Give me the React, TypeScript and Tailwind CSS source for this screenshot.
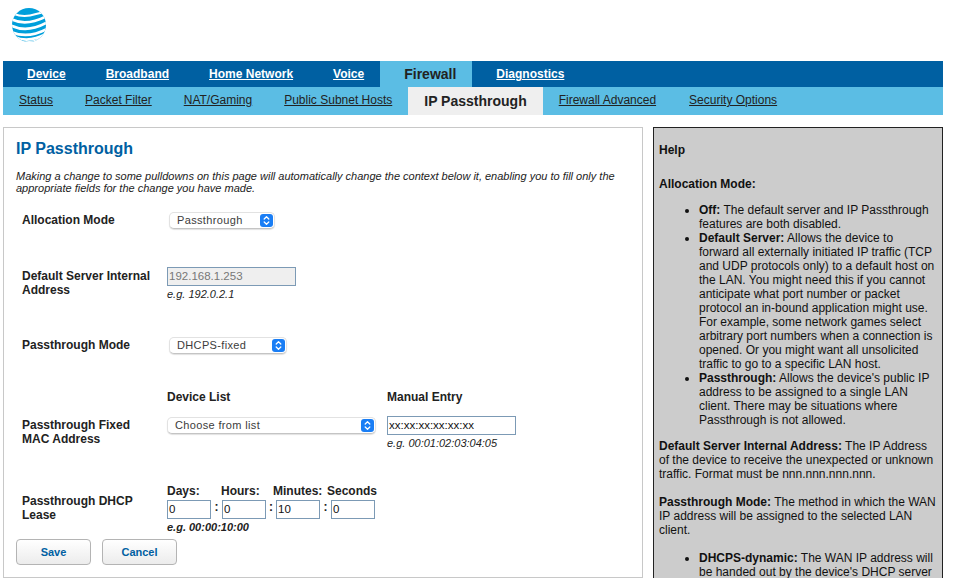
const F = { fontFamily: '"Liberation Sans", Arial, sans-serif' };

function Logo() {
  return (
    <svg width="34" height="34" viewBox="0 0 34 34" className="block">
      <defs>
        <clipPath id="globe">
          <circle cx="17" cy="17" r="17" />
        </clipPath>
      </defs>
      <g clipPath="url(#globe)">
        <rect width="34" height="34" fill="#009fdb" />
        <g fill="none" stroke="#fff">
          <path d="M2 6 Q12 10 24 6 Q28 5 33 4" strokeWidth="2" />
          <path d="M-1 11 Q14 19 35 8" strokeWidth="2.6" />
          <path d="M-1 17.5 Q15 25.5 35 14.5" strokeWidth="2.6" />
          <path d="M-1 24 Q16 31 35 21" strokeWidth="2.8" />
          <path d="M2 29 Q17 35.5 34 26" strokeWidth="2.8" />
        </g>
        <path d="M5 33 Q17 36 30 30" fill="none" stroke="#fff" strokeWidth="1.6" />
      </g>
    </svg>
  );
}

function Chevrons() {
  return (
    <span className="flex h-[13px] w-[13px] shrink-0 items-center justify-center rounded-[3px] bg-[#1a7ef5]">
      <svg width="7" height="11" viewBox="0 0 7 11" fill="none" stroke="#fff" strokeWidth="1.3" strokeLinecap="round" strokeLinejoin="round">
        <path d="M1.2 4 L3.5 1.8 L5.8 4" />
        <path d="M1.2 7 L3.5 9.2 L5.8 7" />
      </svg>
    </span>
  );
}

function MacSelect({ value, className }: { value: string; className: string }) {
  return (
    <div
      className={`flex h-[17px] items-center justify-between rounded-[5px] border border-[#e2e2e2] border-b-[#c4c4c4] bg-white pr-[1px] pl-[7px] text-[11px] tracking-[0.35px] text-[#3c3c3c] shadow-[0_1px_1px_rgba(0,0,0,0.12)] ${className}`}
    >
      <span>{value}</span>
      <Chevrons />
    </div>
  );
}

function TextBox({ value, className }: { value: string; className: string }) {
  return (
    <div className={`flex h-[19px] items-center border border-[#7c9ab5] pl-[1px] text-[11.5px] ${className}`}>
      {value}
    </div>
  );
}

function Hint({ children, bold }: { children: string; bold?: boolean }) {
  return <div className={`text-[11px] leading-[12px] italic text-[#222] ${bold ? 'font-bold' : ''}`}>{children}</div>;
}

function Label({ children }: { children: React.ReactNode }) {
  return <div className="w-[145px] shrink-0 text-[12px] leading-[14px] font-bold text-[#222]">{children}</div>;
}

const top = ['Device', 'Broadband', 'Home Network', 'Voice', 'Firewall', 'Diagnostics'];
const sub = ['Status', 'Packet Filter', 'NAT/Gaming', 'Public Subnet Hosts', 'IP Passthrough', 'Firewall Advanced', 'Security Options'];

export default function App() {
  return (
    <div style={F} className="h-[578px] w-[953px] overflow-hidden bg-white">
      <div className="h-[61px] pt-[8px] pl-[12px]">
        <Logo />
      </div>
      <div className="ml-[3px] flex h-[26px] w-[940px] bg-[#0060a2]">
        {top.map((t) =>
          t === 'Firewall' ? (
            <div key={t} className="flex items-center bg-[#5bbde4] pr-4 pl-6 text-[14px] font-bold text-[#222]">
              {t}
            </div>
          ) : (
            <a key={t} className="flex items-center pr-4 pl-6 text-[12px] font-bold text-white underline">
              {t}
            </a>
          ),
        )}
      </div>
      <div className="ml-[3px] flex h-[28px] w-[940px] bg-[#5bbde4]">
        {sub.map((t) =>
          t === 'IP Passthrough' ? (
            <div key={t} className="flex items-center bg-[#efefef] px-4 text-[14px] font-bold text-[#222]">
              {t}
            </div>
          ) : (
            <a
              key={t}
              className={`flex items-center pb-[2px] pl-4 text-[12px] text-[#222] underline ${t === 'Firewall Advanced' ? 'pr-[17px]' : 'pr-4'}`}
            >
              {t}
            </a>
          ),
        )}
      </div>
      <div className="mt-[12px] ml-[3px] flex h-[460px] w-[940px] items-start gap-[10px]">
        <div className="h-[451px] w-[640px] shrink-0 border border-[#c8c8c8] px-[12px] pt-[11px]">
          <h1 className="text-[16px] leading-[20px] font-bold text-[#0060a2]">IP Passthrough</h1>
          <p className="mt-[11px] w-[610px] text-[11px] leading-[12px] italic text-[#222]">
            Making a change to some pulldowns on this page will automatically change the context below it, enabling you to fill only the appropriate fields for the change you have made.
          </p>
          <div className="mt-[18px] flex h-[54px] items-start pl-[6px]">
            <div className="mt-[1px]">
              <Label>Allocation Mode</Label>
            </div>
            <MacSelect value="Passthrough" className="ml-[2px] w-[106px]" />
          </div>
          <div className="mt-[1px] flex h-[70px] pl-[6px]">
            <div className="mt-[2px]">
              <Label>
                Default Server Internal
                <br />
                Address
              </Label>
            </div>
            <div>
              <TextBox value="192.168.1.253" className="w-[129px] bg-[#efefef] text-[#777]" />
              <div className="mt-[2px]">
                <Hint>e.g. 192.0.2.1</Hint>
              </div>
            </div>
          </div>
          <div className="flex h-[47px] items-start pl-[6px]">
            <div className="mt-[1px]">
              <Label>Passthrough Mode</Label>
            </div>
            <MacSelect value="DHCPS-fixed" className="ml-[2px] w-[118px]" />
          </div>
          <div className="mt-[6px] flex h-[94px] pl-[6px]">
            <div className="mt-[28px]">
              <Label>
                Passthrough Fixed
                <br />
                MAC Address
              </Label>
            </div>
            <div>
              <div className="flex text-[12px] leading-[14px] font-bold text-[#222]">
                <div className="w-[220px]">Device List</div>
                <div>Manual Entry</div>
              </div>
              <div className="mt-[12px] flex items-start">
                <MacSelect value="Choose from list" className="mt-[1px] w-[209px]" />
                <div className="ml-[11px]">
                  <TextBox value="xx:xx:xx:xx:xx:xx" className="w-[129px] bg-white text-[#111]" />
                  <div className="mt-[2px]">
                    <Hint>e.g. 00:01:02:03:04:05</Hint>
                  </div>
                </div>
              </div>
            </div>
          </div>
          <div className="flex h-[55px] pl-[6px]">
            <div className="mt-[10px]">
              <Label>
                Passthrough DHCP
                <br />
                Lease
              </Label>
            </div>
            <div>
              <div className="flex text-[12px] leading-[14px] font-bold text-[#222]">
                <div className="w-[54px]">Days:</div>
                <div className="w-[52px]">Hours:</div>
                <div className="w-[54px]">Minutes:</div>
                <div>Seconds</div>
              </div>
              <div className="mt-[2px] flex items-start">
                <TextBox value="0" className="w-[44px] bg-white text-[#111]" />
                <span className="w-[11px] text-center text-[12px] leading-[14px] font-bold text-[#222]">:</span>
                <TextBox value="0" className="w-[44px] bg-white text-[#111]" />
                <span className="w-[10px] text-center text-[12px] leading-[14px] font-bold text-[#222]">:</span>
                <TextBox value="10" className="w-[44px] bg-white text-[#111]" />
                <span className="w-[11px] text-center text-[12px] leading-[14px] font-bold text-[#222]">:</span>
                <TextBox value="0" className="w-[44px] bg-white text-[#111]" />
              </div>
              <div className="mt-[2px]">
                <Hint bold>e.g. 00:00:10:00</Hint>
              </div>
            </div>
          </div>
          <div className="flex gap-[11px]">
            {['Save', 'Cancel'].map((b) => (
              <button
                key={b}
                className="h-[26px] w-[75px] rounded-[4px] border border-[#b4b4b4] bg-gradient-to-b from-white to-[#ececec] text-[11px] font-bold text-[#0060a2]"
              >
                {b}
              </button>
            ))}
          </div>
        </div>
        <div className="h-[470px] w-[290px] shrink-0 border border-[#222] bg-[#cccccc] px-[5px] pt-[15px] text-[12px] leading-[14px] text-[#111]">
          <p className="font-bold">Help</p>
          <p className="mt-[20px] font-bold">Allocation Mode:</p>
          <ul className="mt-[12px] list-disc pr-[2px] pl-[40px]">
            <li>
              <b>Off:</b> The default server and IP Passthrough features are both disabled.
            </li>
            <li>
              <b>Default Server:</b> Allows the device to forward all externally initiated IP traffic (TCP and UDP protocols only) to a default host on the LAN. You might need this if you cannot anticipate what port number or packet protocol an in-bound application might use. For example, some network games select arbitrary port numbers when a connection is opened. Or you might want all unsolicited traffic to go to a specific LAN host.
            </li>
            <li>
              <b>Passthrough:</b> Allows the device's public IP address to be assigned to a single LAN client. There may be situations where Passthrough is not allowed.
            </li>
          </ul>
          <p className="mt-[12px]">
            <b>Default Server Internal Address:</b> The IP Address of the device to receive the unexpected or unknown traffic. Format must be nnn.nnn.nnn.nnn.
          </p>
          <p className="mt-[14px]">
            <b>Passthrough Mode:</b> The method in which the WAN IP address will be assigned to the selected LAN client.
          </p>
          <ul className="mt-[14px] list-disc pr-[2px] pl-[40px]">
            <li>
              <b>DHCPS-dynamic:</b> The WAN IP address will be handed out by the device's DHCP server
            </li>
          </ul>
        </div>
      </div>
    </div>
  );
}
